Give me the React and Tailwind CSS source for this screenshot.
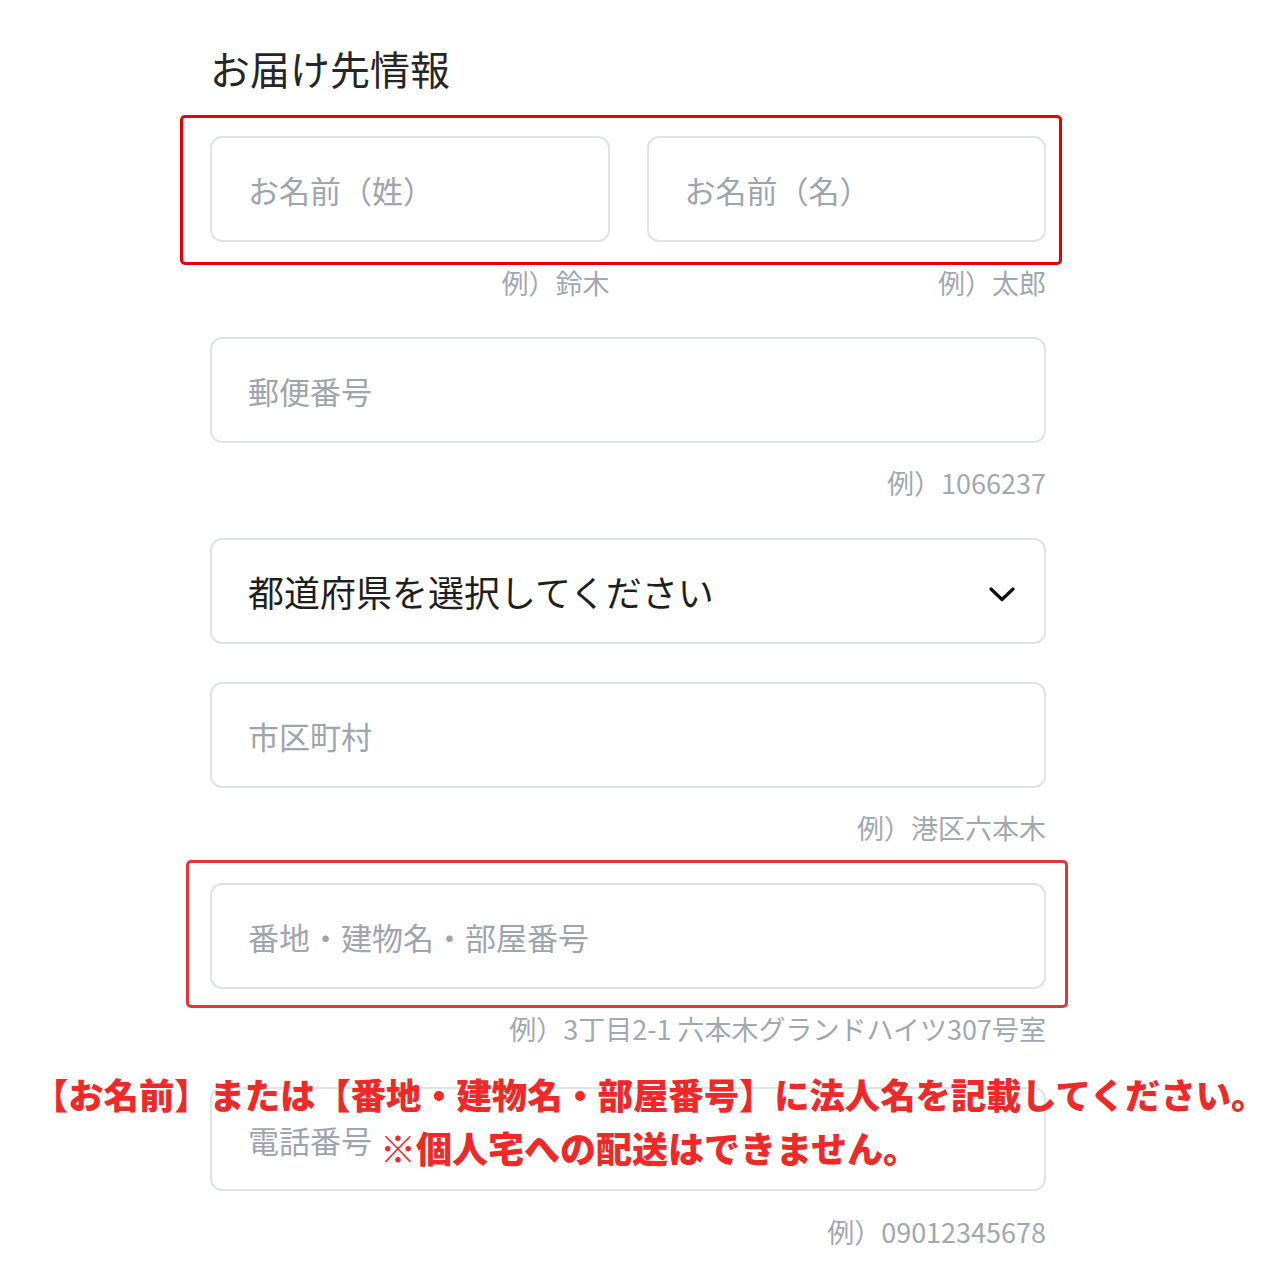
import React from "react";

const font = { fontFamily: '"Noto Sans CJK JP", "Noto Sans", sans-serif' };

function Field({ placeholder, className = "" }) {
  return (
    <input
      readOnly
      placeholder={placeholder}
      className={`w-full h-[106px] border-2 border-[#e0e3e8] rounded-[12px] bg-white pl-[36px] text-[31px] text-[#222] placeholder:text-[#9fa4ae] outline-none ${className}`}
    />
  );
}

function Hint({ children, className = "" }) {
  return (
    <p className={`h-[30px] leading-[30px] text-right text-[27px] text-[#a2a7b0] ${className}`}>
      {children}
    </p>
  );
}

export default function App() {
  return (
    <div className="relative w-[1280px] h-[1280px] bg-white overflow-hidden" style={font}>
      {/* form */}
      <div className="ml-[210px] w-[836px] pt-[44px]">
        <h2 className="text-[40px] leading-[48px] text-[#262626]">お届け先情報</h2>

        <div className="mt-[44px] grid grid-cols-2 gap-x-[37px]">
          <div>
            <Field placeholder="お名前（姓）" />
            <Hint className="mt-[26px]">例）鈴木</Hint>
          </div>
          <div>
            <Field placeholder="お名前（名）" />
            <Hint className="mt-[26px]">例）太郎</Hint>
          </div>
        </div>

        <Field placeholder="郵便番号" className="mt-[39px]" />
        <Hint className="mt-[25px]">例）1066237</Hint>

        <div className="mt-[40px] h-[106px] border-2 border-[#e0e3e8] rounded-[12px] flex items-center justify-between pl-[36px] pr-[28px]">
          <span className="text-[36px] text-[#1f1f1f]">都道府県を選択してください</span>
          <svg width="28" height="16" viewBox="0 0 28 16" fill="none" className="mt-[7px]">
            <path d="M3 2 L14 12.5 L25 2" stroke="#111" strokeWidth="3.2" strokeLinecap="round" strokeLinejoin="round" />
          </svg>
        </div>

        <Field placeholder="市区町村" className="mt-[38px]" />
        <Hint className="mt-[25px]">例）港区六本木</Hint>

        <Field placeholder="番地・建物名・部屋番号" className="mt-[40px]" />
        <Hint className="mt-[25px]">例）3丁目2-1 六本木グランドハイツ307号室</Hint>

        <Field placeholder="電話番号" className="mt-[43px] !h-[104px]" />
        <Hint className="mt-[26px]">例）09012345678</Hint>
      </div>

      {/* annotation overlays */}
      <div className="absolute left-[180px] top-[115px] w-[882px] h-[150px] border-[3px] border-[#e60000] rounded-[5px]" />
      <div className="absolute left-[186px] top-[860px] w-[882px] h-[148px] border-[3px] border-[#e8333a] rounded-[5px]" />

      <p className="absolute left-[33px] top-[1071px] text-[35.3px] leading-[46px] font-black text-[#f02828] whitespace-nowrap">
        【お名前】または【番地・建物名・部屋番号】に法人名を記載してください。
      </p>
      <p className="absolute left-[380px] top-[1124px] text-[36px] leading-[46px] font-black text-[#f02828] whitespace-nowrap">
        ※個人宅への配送はできません。
      </p>
    </div>
  );
}
